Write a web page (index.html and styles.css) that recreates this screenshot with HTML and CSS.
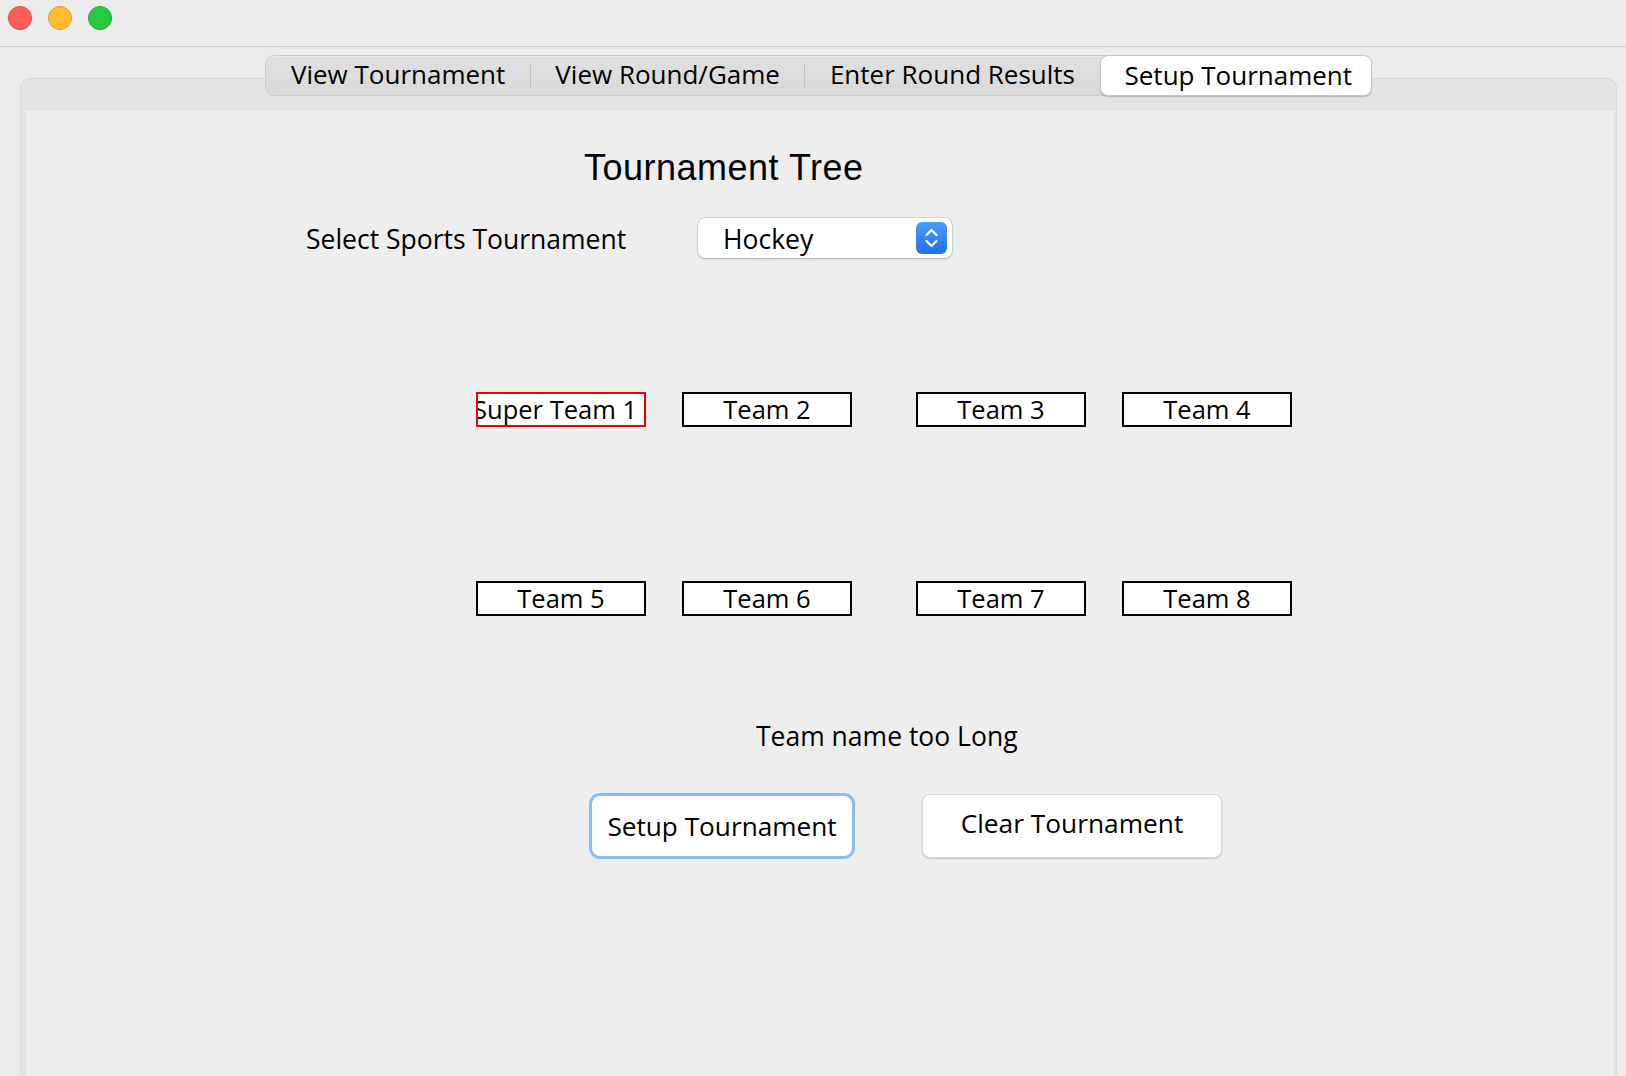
FILE: index.html
```html
<!DOCTYPE html>
<html lang="en">
<head>
<meta charset="utf-8">
<title>Tournament Tree</title>
<link rel="stylesheet" href="styles.css">
</head>
<body>
<div class="titlebar">
  <span class="light red"></span>
  <span class="light yellow"></span>
  <span class="light green"></span>
</div>
<div class="window">
  <div class="tabs-wrap">
    <div class="tabs">
      <div class="tab">View Tournament</div>
      <span class="sep"></span>
      <div class="tab">View Round/Game</div>
      <span class="sep"></span>
      <div class="tab">Enter Round Results</div>
      <div class="tab selected">Setup Tournament</div>
    </div>
  </div>
  <div class="panel">
    <div class="content">
      <div class="title">Tournament Tree</div>
      <div class="select-row">
        <div class="select-label">Select Sports Tournament</div>
        <div class="dropdown">
          <span class="dropdown-value">Hockey</span>
          <svg class="stepper" width="31" height="32" viewBox="0 0 31 32">
            <defs>
              <linearGradient id="stepBlue" x1="0" y1="0" x2="0" y2="1">
                <stop offset="0" stop-color="#4c9cf8"/>
                <stop offset="1" stop-color="#1f70ee"/>
              </linearGradient>
            </defs>
            <rect x="0" y="0" width="31" height="32" rx="6" fill="url(#stepBlue)"/>
            <polyline points="10.5,13 15.5,8 20.5,13" fill="none" stroke="#fff" stroke-width="2.2" stroke-linecap="round" stroke-linejoin="round"/>
            <polyline points="10.5,19 15.5,24 20.5,19" fill="none" stroke="#fff" stroke-width="2.2" stroke-linecap="round" stroke-linejoin="round"/>
          </svg>
        </div>
      </div>
      <div class="team-row">
        <div class="pair">
          <div class="team error"><span>Super Team 1</span></div>
          <div class="team">Team 2</div>
        </div>
        <div class="pair">
          <div class="team">Team 3</div>
          <div class="team">Team 4</div>
        </div>
      </div>
      <div class="team-row second">
        <div class="pair">
          <div class="team">Team 5</div>
          <div class="team">Team 6</div>
        </div>
        <div class="pair">
          <div class="team">Team 7</div>
          <div class="team">Team 8</div>
        </div>
      </div>
      <div class="message">Team name too Long</div>
      <div class="actions">
        <button class="btn btn-focus" type="button">Setup Tournament</button>
        <button class="btn btn-plain" type="button">Clear Tournament</button>
      </div>
    </div>
  </div>
</div>
</body>
</html>
```
FILE: styles.css
```css
html, body {
  margin: 0;
  padding: 0;
}

body {
  background: #ececec;
  font-family: "Open Sans", "DejaVu Sans", sans-serif;
  color: #000;
  height: 1076px;
  overflow: hidden;
}

/* ---------- title bar ---------- */
.titlebar {
  box-sizing: border-box;
  height: 47px;
  border-bottom: 1px solid #d3d3d3;
  display: flex;
  gap: 16px;
  padding: 6px 0 0 8px;
}

.light {
  box-sizing: border-box;
  width: 24px;
  height: 24px;
  border-radius: 50%;
  border: 1px solid transparent;
}

.light.red { background: #ff5f57; border-color: #e2463f; }
.light.yellow { background: #febc2e; border-color: #e0a028; }
.light.green { background: #28c840; border-color: #1eab30; }

/* ---------- window / tab pane ---------- */
.window {
  padding: 8px 9px 0 20px;
}

.tabs-wrap {
  display: flex;
  justify-content: center;
  position: relative;
  z-index: 1;
}

.tabs {
  display: flex;
  align-items: center;
  height: 41px;
  box-sizing: border-box;
  border: 1px solid #cbcbcb;
  border-radius: 9px;
  background: linear-gradient(#e0e0e0, #d9d9d9);
  box-shadow: inset 0 1px 0 rgba(255, 255, 255, 0.35);
}

.tab {
  height: 39px;
  box-sizing: border-box;
  padding: 1px 24.5px 3px;
  font-size: 26px;
  line-height: 35px;
  white-space: nowrap;
}

.tab.selected {
  height: 41px;
  margin: 0 -1px 0 0;
  padding: 2px 18.5px 3px 24px;
  background: #fff;
  border: 1px solid #c7c7c7;
  border-radius: 8px;
  box-shadow: 0 1px 1.5px rgba(0, 0, 0, 0.22);
}

.sep {
  width: 1px;
  height: 24px;
  background: #c2c2c2;
}

.panel {
  margin-top: -18px;
  height: 998px;
  box-sizing: border-box;
  border: 1px solid #d8d8d8;
  border-bottom: none;
  border-radius: 10px 10px 0 0;
  background: #e4e4e4;
  padding: 32px 2px 0 5px;
}

.content {
  background: #eeeeee;
  height: 100%;
  overflow: hidden;
}

/* ---------- form ---------- */
.title {
  margin: 37px 0 0 558px;
  font-family: "Liberation Sans", Arial, sans-serif;
  font-size: 36px;
  letter-spacing: 0.5px;
  line-height: 40px;
}

.select-row {
  display: flex;
  align-items: center;
  margin: 30px 0 0 280px;
  height: 40px;
}

.select-label {
  width: 392px;
  font-size: 26.5px;
  line-height: 40px;
  padding-top: 1px;
  white-space: nowrap;
}

.dropdown {
  box-sizing: border-box;
  width: 254px;
  height: 40px;
  display: flex;
  align-items: center;
  justify-content: space-between;
  padding: 0 5px 0 25px;
  background: #fff;
  border-radius: 7px;
  box-shadow: 0 0 0 0.5px rgba(0, 0, 0, 0.18), 0 1px 2px rgba(0, 0, 0, 0.22);
  font-size: 26.5px;
  line-height: 40px;
}

.dropdown-value {
  padding-top: 1px;
}

.stepper {
  display: block;
}

.team-row {
  display: flex;
  gap: 64px;
  margin: 134px 0 0 450px;
}

.team-row.second {
  margin-top: 154px;
}

.pair {
  display: flex;
  gap: 36px;
}

.team {
  box-sizing: border-box;
  width: 170px;
  height: 35px;
  border: 2px solid #000;
  background: #fff;
  text-align: center;
  font-size: 25.5px;
  line-height: 29px;
  padding: 1px 0 1px;
  white-space: nowrap;
}

.team.error {
  border-color: #e8000b;
  display: flex;
  justify-content: flex-end;
  overflow: hidden;
  padding-right: 7px;
}

.message {
  margin: 104px 0 0 730px;
  font-size: 26.5px;
  line-height: 32px;
}

.actions {
  display: flex;
  align-items: flex-start;
  gap: 67px;
  margin: 41px 0 0 563px;
}

.btn {
  font-family: "Open Sans", "DejaVu Sans", sans-serif;
  color: #000;
  background: #fff;
  margin: 0;
  padding: 0;
  box-sizing: border-box;
  text-align: center;
  white-space: nowrap;
  cursor: default;
}

.btn-focus {
  width: 266px;
  height: 66px;
  border: 3px solid #8fbcf0;
  border-radius: 11px;
  font-size: 26.2px;
  line-height: 60px;
}

.btn-plain {
  width: 300px;
  height: 64px;
  margin-top: 1px;
  border: 1px solid #d6d6d6;
  border-radius: 8px;
  box-shadow: 0 1px 1.5px rgba(0, 0, 0, 0.18);
  font-size: 26.3px;
  line-height: 56px;
  padding-bottom: 6px;
}
```
